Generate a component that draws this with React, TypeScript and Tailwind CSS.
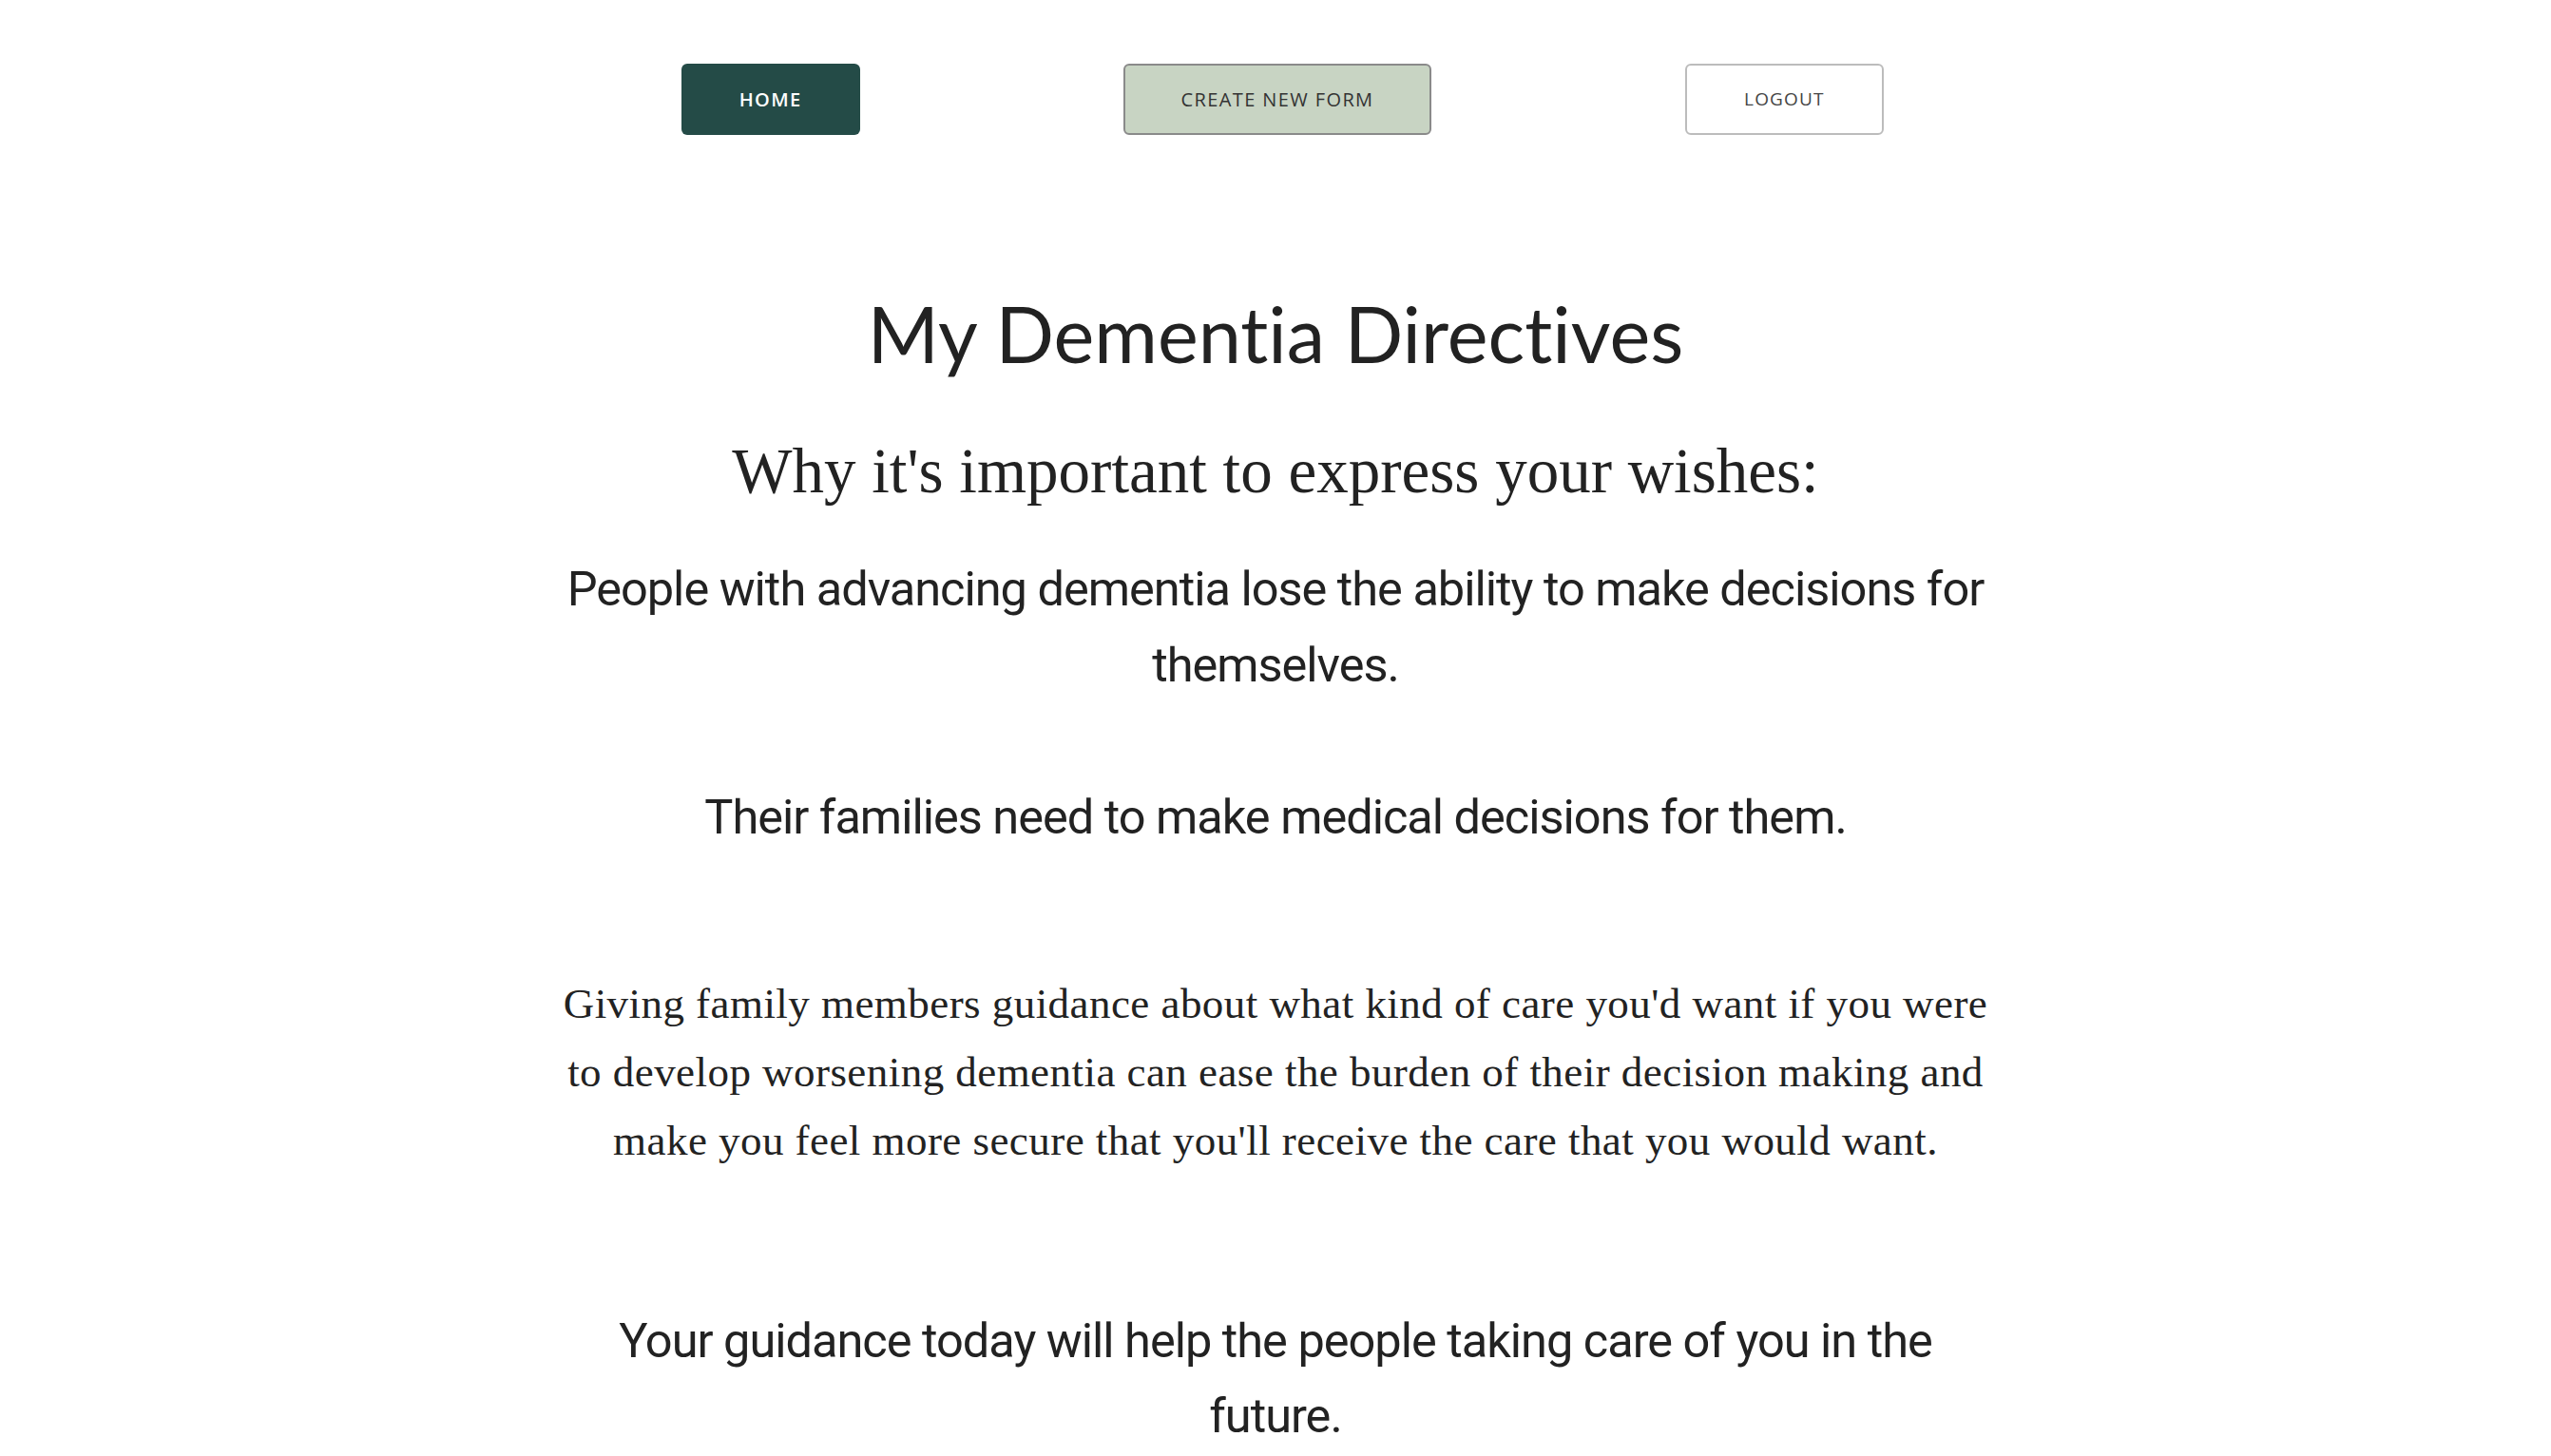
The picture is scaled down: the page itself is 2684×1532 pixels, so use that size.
export default function App() {
  return (
    <div className="min-h-screen bg-white text-[#222] pb-24">
      <nav className="mx-auto grid w-[1604px] grid-cols-3 justify-items-center pl-[4px] pt-[67px]">
        <button className="h-[75px] w-[188px] rounded-md bg-[#244b47] text-[20px] font-semibold tracking-[0.07em] text-white [font-family:'Open_Sans',sans-serif]">
          HOME
        </button>
        <button className="h-[75px] w-[324px] rounded-md border-2 border-[#8a8a8a] bg-[#c8d4c3] text-[20px] font-medium tracking-[0.07em] text-[#333] [font-family:'Open_Sans',sans-serif]">
          CREATE NEW FORM
        </button>
        <button className="h-[75px] w-[209px] rounded-md border-2 border-[#bcbcbc] bg-white text-[19px] font-medium tracking-[0.06em] text-[#444] [font-family:'Open_Sans',sans-serif]">
          LOGOUT
        </button>
      </nav>

      <main className="mx-auto flex w-[1600px] flex-col items-center text-center">
        <h1 className="mt-[169px] text-[81px] leading-[80px] font-normal [font-variant-ligatures:none] [font-family:Lato,sans-serif]">
          My Dementia Directives
        </h1>
        <h2 className="mt-[69px] text-[67px] leading-[70px] font-normal [font-family:'Liberation_Serif',serif]">
          Why it's important to express your wishes:
        </h2>
        <p className="mt-[50px] text-[50.5px] leading-[80px] tracking-[-0.02em] [font-family:Roboto,sans-serif]">
          People with advancing dementia lose the ability to make decisions for
          <br />
          themselves.
        </p>
        <p className="mt-[80px] text-[50.5px] leading-[80px] tracking-[-0.02em] [font-family:Roboto,sans-serif]">
          Their families need to make medical decisions for them.
        </p>
        <p className="mt-[120px] text-[45px] leading-[72px] tracking-[0.01em] [font-family:'Liberation_Serif',serif]">
          Giving family members guidance about what kind of care you'd want if you were
          <br />
          to develop worsening dementia can ease the burden of their decision making and
          <br />
          make you feel more secure that you'll receive the care that you would want.
        </p>
        <p className="mt-[135px] text-[50.5px] leading-[79px] tracking-[-0.02em] [font-family:Roboto,sans-serif]">
          Your guidance today will help the people taking care of you in the
          <br />
          future.
        </p>
      </main>
    </div>
  )
}
